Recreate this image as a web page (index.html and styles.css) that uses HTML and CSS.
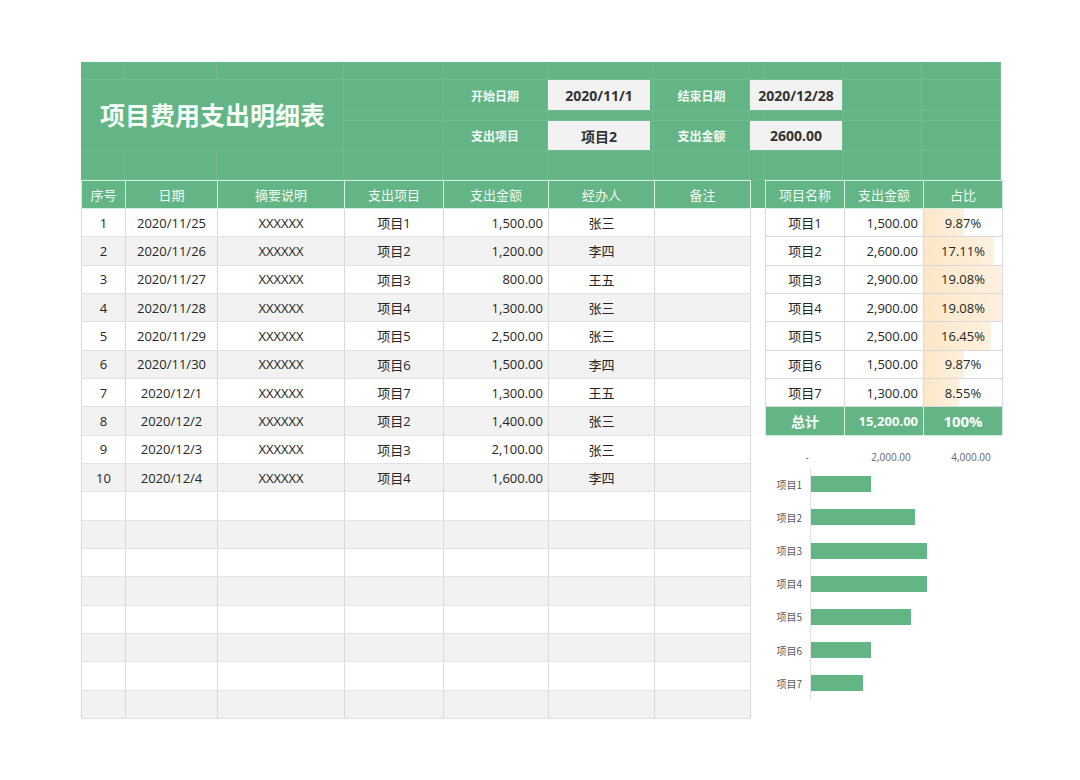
FILE: index.html
```html
<!DOCTYPE html>
<html lang="zh">
<head>
<meta charset="utf-8">
<title>项目费用支出明细表</title>
<link rel="stylesheet" href="styles.css">
</head>
<body>
<div class="sheet">
  <div class="banner">
    <div class="c"></div><div class="c"></div><div class="c"></div><div class="c"></div><div class="c"></div><div class="c"></div><div class="c"></div><div class="c"></div><div class="c"></div><div class="c"></div><div class="c"></div>
    <div class="c title">项目费用支出明细表</div>
    <div class="c"></div>
    <div class="c label">开始日期</div>
    <div class="c"><div class="box narrow">2020/11/1</div></div>
    <div class="c label">结束日期</div>
    <div class="c wide"><div class="box">2020/12/28</div></div>
    <div class="c"></div><div class="c"></div>
    <div class="c"></div><div class="c"></div><div class="c"></div><div class="c"></div><div class="c"></div><div class="c"></div><div class="c"></div><div class="c"></div>
    <div class="c"></div>
    <div class="c label">支出项目</div>
    <div class="c"><div class="box narrow">项目2</div></div>
    <div class="c label">支出金额</div>
    <div class="c wide"><div class="box">2600.00</div></div>
    <div class="c"></div><div class="c"></div>
    <div class="c"></div><div class="c"></div><div class="c"></div><div class="c"></div><div class="c"></div><div class="c"></div><div class="c"></div><div class="c"></div><div class="c"></div><div class="c"></div><div class="c"></div>
  </div>
  <div class="body">
    <table class="ledger">
      <colgroup><col class="w44"><col class="w92"><col class="w127"><col class="w99"><col class="w105"><col class="w106"><col class="w96"></colgroup>
      <thead>
        <tr><th>序号</th><th>日期</th><th>摘要说明</th><th>支出项目</th><th>支出金额</th><th>经办人</th><th>备注</th></tr>
      </thead>
      <tbody>
        <tr><td>1</td><td>2020/11/25</td><td>XXXXXX</td><td>项目1</td><td class="num">1,500.00</td><td>张三</td><td></td></tr>
        <tr><td>2</td><td>2020/11/26</td><td>XXXXXX</td><td>项目2</td><td class="num">1,200.00</td><td>李四</td><td></td></tr>
        <tr><td>3</td><td>2020/11/27</td><td>XXXXXX</td><td>项目3</td><td class="num">800.00</td><td>王五</td><td></td></tr>
        <tr><td>4</td><td>2020/11/28</td><td>XXXXXX</td><td>项目4</td><td class="num">1,300.00</td><td>张三</td><td></td></tr>
        <tr><td>5</td><td>2020/11/29</td><td>XXXXXX</td><td>项目5</td><td class="num">2,500.00</td><td>张三</td><td></td></tr>
        <tr><td>6</td><td>2020/11/30</td><td>XXXXXX</td><td>项目6</td><td class="num">1,500.00</td><td>李四</td><td></td></tr>
        <tr><td>7</td><td>2020/12/1</td><td>XXXXXX</td><td>项目7</td><td class="num">1,300.00</td><td>王五</td><td></td></tr>
        <tr><td>8</td><td>2020/12/2</td><td>XXXXXX</td><td>项目2</td><td class="num">1,400.00</td><td>张三</td><td></td></tr>
        <tr><td>9</td><td>2020/12/3</td><td>XXXXXX</td><td>项目3</td><td class="num">2,100.00</td><td>张三</td><td></td></tr>
        <tr><td>10</td><td>2020/12/4</td><td>XXXXXX</td><td>项目4</td><td class="num">1,600.00</td><td>李四</td><td></td></tr>
        <tr><td></td><td></td><td></td><td></td><td></td><td></td><td></td></tr>
        <tr><td></td><td></td><td></td><td></td><td></td><td></td><td></td></tr>
        <tr><td></td><td></td><td></td><td></td><td></td><td></td><td></td></tr>
        <tr><td></td><td></td><td></td><td></td><td></td><td></td><td></td></tr>
        <tr><td></td><td></td><td></td><td></td><td></td><td></td><td></td></tr>
        <tr><td></td><td></td><td></td><td></td><td></td><td></td><td></td></tr>
        <tr><td></td><td></td><td></td><td></td><td></td><td></td><td></td></tr>
        <tr><td></td><td></td><td></td><td></td><td></td><td></td><td></td></tr>
      </tbody>
    </table>
    <div class="side">
      <table class="summary">
        <colgroup><col class="w79"><col class="w79"><col class="w79"></colgroup>
        <thead>
          <tr><th>项目名称</th><th>支出金额</th><th>占比</th></tr>
        </thead>
        <tbody>
          <tr><td>项目1</td><td class="num">1,500.00</td><td class="pct" style="--p:51.7%">9.87%</td></tr>
          <tr><td>项目2</td><td class="num">2,600.00</td><td class="pct" style="--p:89.7%">17.11%</td></tr>
          <tr><td>项目3</td><td class="num">2,900.00</td><td class="pct" style="--p:100%">19.08%</td></tr>
          <tr><td>项目4</td><td class="num">2,900.00</td><td class="pct" style="--p:100%">19.08%</td></tr>
          <tr><td>项目5</td><td class="num">2,500.00</td><td class="pct" style="--p:86.2%">16.45%</td></tr>
          <tr><td>项目6</td><td class="num">1,500.00</td><td class="pct" style="--p:51.7%">9.87%</td></tr>
          <tr><td>项目7</td><td class="num">1,300.00</td><td class="pct" style="--p:44.8%">8.55%</td></tr>
          <tr class="total"><td>总计</td><td class="num">15,200.00</td><td class="big">100%</td></tr>
        </tbody>
      </table>
      <div class="chart">
        <div class="ticks">
          <span class="tick" style="left:-3px">-</span>
          <span class="tick" style="left:81px">2,000.00</span>
          <span class="tick" style="left:161px">4,000.00</span>
        </div>
        <div class="brow"><span class="blabel">项目1</span><div class="plot"><div class="bar" style="width:60px"></div></div></div>
        <div class="brow"><span class="blabel">项目2</span><div class="plot"><div class="bar" style="width:104px"></div></div></div>
        <div class="brow"><span class="blabel">项目3</span><div class="plot"><div class="bar" style="width:116px"></div></div></div>
        <div class="brow"><span class="blabel">项目4</span><div class="plot"><div class="bar" style="width:116px"></div></div></div>
        <div class="brow"><span class="blabel">项目5</span><div class="plot"><div class="bar" style="width:100px"></div></div></div>
        <div class="brow"><span class="blabel">项目6</span><div class="plot"><div class="bar" style="width:60px"></div></div></div>
        <div class="brow"><span class="blabel">项目7</span><div class="plot"><div class="bar" style="width:52px"></div></div></div>
      </div>
    </div>
  </div>
</div>
</body>
</html>
```

FILE: styles.css
```css
* { box-sizing: border-box; }

body {
  margin: 0;
  background: #ffffff;
  font-family: "Open Sans", "Noto Sans CJK SC", sans-serif;
  color: #262626;
}

.sheet {
  width: 920px;
  margin: 62px 0 0 81px;
}

/* ---------- green banner ---------- */
.banner {
  display: grid;
  grid-template-columns: 44px 92px 127px 99px 105px 106px 96px 14px 79px 79px 79px;
  grid-template-rows: 18px 31px 10px 30px 29px;
  background: #64b585;
}

.c {
  border-right: 1px solid rgba(255, 255, 255, 0.09);
  border-bottom: 1px solid rgba(255, 255, 255, 0.09);
  display: flex;
}

.c.wide { grid-column: span 2; }

.title {
  grid-column: 1 / 4;
  grid-row: 2 / 5;
  align-items: center;
  padding-left: 19px;
  padding-bottom: 2px;
  font-family: "Noto Sans CJK SC", sans-serif;
  font-size: 25px;
  font-weight: 700;
  color: #f5fff8;
}

.label {
  align-items: center;
  justify-content: center;
  font-family: "Noto Sans CJK SC", sans-serif;
  font-size: 12px;
  font-weight: 700;
  color: #f2fbf5;
}

.box {
  flex: 1;
  display: flex;
  align-items: center;
  justify-content: center;
  background: #f2f2f2;
  font-size: 14px;
  font-weight: 700;
  color: #333333;
}

.box.narrow { margin-right: 3px; }

/* ---------- body ---------- */
.body {
  display: flex;
  gap: 14px;
  background: linear-gradient(#64b585 0 28px, transparent 28px);
}

table {
  border-collapse: collapse;
  table-layout: fixed;
}

.ledger { width: 669px; }
.summary { width: 237px; }

.w44 { width: 44px; }
.w92 { width: 92px; }
.w127 { width: 127px; }
.w99 { width: 99px; }
.w105 { width: 105px; }
.w106 { width: 106px; }
.w96 { width: 96px; }
.w79 { width: 79px; }

th {
  height: 28px;
  padding: 0;
  background: #64b585;
  color: #f1faf4;
  font-family: "Noto Sans CJK SC", sans-serif;
  font-weight: 400;
  font-size: 13px;
  border: 1px solid #d6f0df;
}

td {
  height: 28.33px;
  padding: 0;
  font-size: 13px;
  text-align: center;
  border-left: 1px solid #d9d9d9;
  border-right: 1px solid #d9d9d9;
  border-bottom: 1px solid #e3e3e3;
  background: #ffffff;
}

.ledger tbody tr:nth-child(even) td { background: #f2f2f2; }

td.num {
  text-align: right;
  padding-right: 5px;
}

.pct {
  background-image: linear-gradient(90deg, #fde7c8, #fdf1df);
  background-repeat: no-repeat;
  background-size: var(--p) 100%;
}

.summary td { border-bottom-color: #d9d9d9; }

.total td {
  background: #64b585;
  color: #f7fff9;
  font-weight: 700;
  font-size: 13px;
  border-color: #d6f0df;
}

.total td:first-child {
  font-family: "Noto Sans CJK SC", sans-serif;
  font-size: 14px;
}

.total td.big { font-size: 15px; }

/* ---------- chart ---------- */
.side { width: 237px; }

.chart { height: 283px; }

.ticks {
  position: relative;
  height: 32px;
  margin-left: 45px;
}

.tick {
  position: absolute;
  top: 15px;
  transform: translateX(-50%);
  font-size: 10px;
  line-height: 12px;
  color: #666666;
  white-space: nowrap;
}

.brow {
  display: flex;
  height: 33.2px;
}

.blabel {
  width: 45px;
  padding-right: 8px;
  display: flex;
  align-items: center;
  justify-content: flex-end;
  font-family: "Noto Sans CJK SC", sans-serif;
  font-size: 10px;
  color: #595959;
}

.plot {
  flex: 1;
  display: flex;
  align-items: center;
  border-left: 1px solid #e2e2e2;
}

.bar {
  height: 16px;
  background: #64b585;
}
```
